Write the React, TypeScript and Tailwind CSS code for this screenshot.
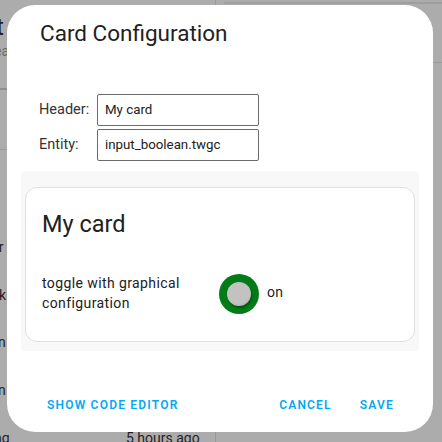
export default function App() {
  return (
    <div className="relative w-[442px] h-[442px] overflow-hidden bg-[#acacac] font-['Roboto',sans-serif]">
      {/* dimmed page behind the dialog */}
      <div className="absolute left-[-4px] top-[9px] text-[24px] text-[#1f1f1f]">
        t
      </div>
      <div className="absolute left-[-6px] top-[41px] text-[14px] text-[#6a6a6a]">
        ea
      </div>
      <div className="absolute left-0 top-[88px] w-[10px] h-[2px] bg-[#8e8e8e]" />
      <div className="absolute left-0 top-[149px] w-[10px] h-px bg-[#9c9c9c]" />
      <div className="absolute left-[-6px] top-[237px] text-[14px] text-[#1f1f1f]">rr</div>
      <div className="absolute left-[-1px] top-[285px] text-[14px] text-[#1f1f1f]">k</div>
      <div className="absolute left-[-2px] top-[332px] text-[14px] text-[#1f1f1f]">n</div>
      <div className="absolute left-[-2px] top-[380px] text-[14px] text-[#1f1f1f]">n</div>
      <div className="absolute left-[-6px] top-[428px] text-[14px] text-[#1f1f1f]">ng</div>
      <div className="absolute left-[126px] top-[428px] text-[14px] text-[#1f1f1f]">
        5 hours ago
      </div>
      <div className="absolute left-[215px] top-0 w-px h-full bg-[#9a9a9a]" />
      <div className="absolute left-[224px] top-[2px] w-[218px] h-[2px] bg-[#9e9e9e]" />
      <div className="absolute left-[433px] top-[62px] w-[9px] h-px bg-[#9a9a9a]" />

      {/* dialog */}
      <div className="absolute left-[7px] top-[5px] w-[426px] h-[427px] bg-white rounded-[28px] px-[14px] pt-[14px] flex flex-col">
        <h2 className="pl-[19px] text-[22.5px] leading-[28px] text-[#212121] font-normal">
          Card Configuration
        </h2>

        <div className="mt-[47px] pl-[18px] flex flex-col gap-[3px] text-[#212121]">
          <div className="flex items-center">
            <span className="w-[58px] text-[14.5px] text-[#333]">Header:</span>
            <div className="w-[162px] h-[32px] border border-[#6b6b6b] rounded-[2px] px-[7px] flex items-center text-[13.3px]">
              My card
            </div>
          </div>
          <div className="flex items-center">
            <span className="w-[58px] text-[14.5px] text-[#333]">Entity:</span>
            <div className="w-[162px] h-[32px] border border-[#6b6b6b] rounded-[2px] px-[7px] flex items-center text-[13.3px]">
              input_boolean.twgc
            </div>
          </div>
        </div>

        {/* preview */}
        <div className="mt-[10px] h-[180px] bg-[#f8f8f8] rounded-[4px] px-[4px] pt-[16px]">
          <div className="h-[155px] bg-white border border-[#e0e0e0] rounded-[12px] px-[16px] pt-[20px]">
            <div className="text-[23.5px] leading-[32px] text-[#212121]">My card</div>
            <div className="mt-[31px] flex items-center text-[14px] text-[#212121]">
              <div className="w-[170px] leading-[20px] tracking-[0.4px]">
                toggle with graphical configuration
              </div>
              <div className="ml-[7px] mt-[3px] w-[40px] h-[40px] rounded-full bg-[#037c17] flex items-center justify-center">
                <div className="w-[24px] h-[24px] rounded-full bg-[radial-gradient(circle_at_45%_40%,#c2c2c2_60%,#9e9e9e_100%)] shadow-[1px_2px_2px_rgba(0,0,0,0.35)]" />
              </div>
              <span className="ml-[8px] tracking-[0.25px]">on</span>
            </div>
          </div>
        </div>

        {/* actions */}
        <div className="mt-auto mb-[18px] flex items-center text-[12px] font-semibold tracking-[1.2px] text-[#03a9f4] pl-[26px] pr-[25px]">
          <span>SHOW CODE EDITOR</span>
          <span className="ml-auto">CANCEL</span>
          <span className="ml-[28px]">SAVE</span>
        </div>
      </div>
    </div>
  );
}
